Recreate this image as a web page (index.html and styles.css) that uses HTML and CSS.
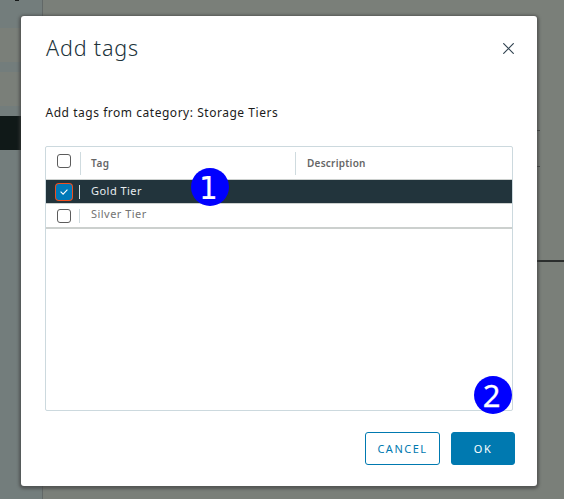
FILE: index.html
```html
<!DOCTYPE html>
<html lang="en">
<head>
<meta charset="utf-8">
<title>Add tags</title>
<link rel="stylesheet" href="styles.css">
</head>
<body>
<div class="backdrop">
  <div class="sidebar">
    <div class="side-mark"></div>
    <div class="side-row"></div>
    <div class="side-row"></div>
    <div class="side-row active"></div>
  </div>
  <div class="page"><div class="edge"></div><div class="edge second"></div><div class="rule"></div></div>
</div>
<div class="overlay">
  <section class="modal">
    <header class="modal-header">
      <h1>Add tags</h1>
      <svg class="close" width="11" height="11" viewBox="0 0 11 11"><path d="M.3.3l10.4 10.4M10.7.3L.3 10.7"/></svg>
    </header>
    <p class="intro">Add tags from category: Storage Tiers</p>
    <div class="datagrid">
      <div class="row head">
        <div class="check"><span class="box"></span></div>
        <div class="cell tag"><span>Tag</span></div>
        <div class="cell desc"><span>Description</span></div>
      </div>
      <div class="row selected">
        <div class="check"><span class="box checked"><svg width="8" height="6" viewBox="0 0 8 6"><path d="M.6 2.6l2.5 2.5L7.4.7"/></svg></span></div>
        <div class="cell tag"><span>Gold Tier</span></div>
      </div>
      <div class="row last">
        <div class="check"><span class="box"></span></div>
        <div class="cell tag"><span>Silver Tier</span></div>
      </div>
      <span class="badge one">1</span>
      <span class="badge two">2</span>
    </div>
    <footer class="actions">
      <div class="btn cancel"><span>CANCEL</span></div>
      <div class="btn ok"><span>OK</span></div>
    </footer>
  </section>
</div>
</body>
</html>
```
FILE: styles.css
```css
* { box-sizing: border-box; }
body {
  margin: 0;
  width: 564px;
  height: 499px;
  overflow: hidden;
  position: relative;
  font-family: "Noto Sans", sans-serif;
  color: #1b1b1b;
}
.backdrop { display: flex; height: 499px; background: #7a7f79; }
.sidebar {
  width: 43px;
  background: #737d7c;
  border-right: 1px solid #626867;
  display: flex;
  flex-direction: column;
  gap: 10px;
}
.side-mark { width: 4px; height: 1px; margin: 0 0 17px 15px; background: #151818; }
.side-row { height: 34px; background: #7a7f79; }
.side-row.active { background: #101918; }
.page { flex: 1; padding-top: 130px; }
.edge { width: 497px; height: 1px; background: #444846; }
.edge.second { margin-top: 35px; }
.rule { margin-top: 93px; height: 2px; background: #2b2e2d; }
.overlay { position: absolute; inset: 0; padding: 16px 27px 13px 21px; }
.modal {
  width: 516px;
  height: 470px;
  padding: 0 24px;
  background: #fff;
  border-radius: 3px;
  box-shadow: 0 1px 3px 2px rgba(60, 60, 60, .6);
}
.modal-header { height: 64px; display: flex; justify-content: space-between; }
h1 {
  margin: 17px 0 0 1px;
  font-size: 21.5px;
  line-height: 29px;
  font-weight: 300;
  letter-spacing: .85px;
  color: #21333b;
}
.close { margin: 27px -1px 0 0; fill: none; stroke: #314351; stroke-width: 1.2; }
.intro { margin: 23px 0 0 .5px; font-size: 12px; line-height: 20px; letter-spacing: .53px; white-space: nowrap; }
.datagrid {
  position: relative;
  width: 468px;
  height: 265px;
  margin-top: 23px;
  border: 1px solid #ccd9de;
  border-radius: 2px;
}
.row { display: flex; height: 24px; border-bottom: 1px solid #ccd0ce; }
.row.head { height: 33px; }
.check {
  width: 34px;
  display: flex;
  justify-content: center;
  align-items: center;
  padding-left: 2px;
}
.head .check { align-items: flex-start; padding-top: 7px; }
.box { width: 14px; height: 14px; border: 1px solid #5c5c5c; border-radius: 3px; background: #fff; }
.box.checked {
  display: flex;
  align-items: center;
  justify-content: center;
  width: 16px;
  height: 16px;
  border: 0;
  background: #0079b8;
  box-shadow: 0 0 0 1px #f05020;
}
.box.checked svg { fill: none; stroke: #fff; stroke-width: 1.1; }
.cell {
  display: flex;
  align-items: center;
  font-size: 11px;
  letter-spacing: .46px;
  color: #737373;
  white-space: nowrap;
}
.cell span { padding-bottom: 2px; }
.cell::before { content: ""; width: 1px; height: 14px; margin-right: 10px; background: #cfdbdf; }
.head .cell { font-size: 10px; font-weight: 600; color: #666; }
.head .cell span { padding-bottom: 1px; }
.head .cell::before { height: 23px; }
.head .tag { width: 215px; letter-spacing: .5px; }
.head .desc { letter-spacing: .25px; }
.head .desc::before { margin-right: 11px; }
.selected { background: #22343c; }
.selected .cell { color: #e8edef; }
.selected .cell::before, .last .cell::before { margin-left: -1px; margin-right: 11px; }
.last { height: 25px; border-bottom: 2px solid #ccd0ce; }
.last .cell span { padding-bottom: 4px; }
.badge {
  position: absolute;
  width: 38px;
  height: 38px;
  border-radius: 50%;
  background: #00f;
  color: #fff;
  font: 31px/39px "Noto Sans", sans-serif;
  text-align: center;
}
.badge.one { left: 145px; top: 21px; padding-right: 3px; font: 32px/40px "DejaVu Sans Condensed", "DejaVu Sans", sans-serif; font-stretch: condensed; -webkit-text-stroke: .2px #fff; }
.badge.two { left: 428px; top: 229px; padding-right: 3px; -webkit-text-stroke: .3px #fff; }
.actions { display: flex; justify-content: flex-end; gap: 11px; margin: 21px -2px 0 0; }
.btn {
  height: 33px;
  display: flex;
  align-items: center;
  justify-content: center;
  border: 1px solid #0079b0;
  border-radius: 3px;
  font-size: 11px;
  letter-spacing: 1.5px;
}
.cancel { width: 75px; color: #0079b0; }
.ok { width: 64px; background: #0079b0; color: #fff; }
```
